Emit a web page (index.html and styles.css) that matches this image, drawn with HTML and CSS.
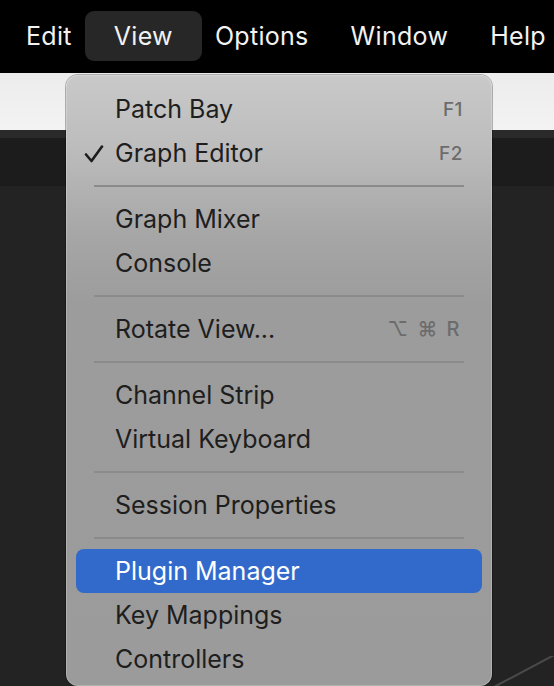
FILE: index.html
```html
<!DOCTYPE html>
<html>
<head>
<meta charset="utf-8">
<link rel="stylesheet" href="styles.css">
</head>
<body>
<div class="screen">
  <nav class="menubar">
    <span class="mb-item">Edit</span>
    <span class="mb-item active">View</span>
    <span class="mb-item">Options</span>
    <span class="mb-item">Window</span>
    <span class="mb-item">Help</span>
  </nav>
  <div class="toolbar"></div>
  <div class="band-top"></div>
  <div class="band"></div>
  <div class="workspace">
    <svg class="wire" width="60" height="30" viewBox="0 0 60 30"><line x1="0" y1="31" x2="62" y2="-2" stroke="#4a4a4a" stroke-width="2"/></svg>
  </div>

  <div class="menu">
    <div class="row"><span class="check"></span><span class="label">Patch Bay</span><span class="key">F1</span></div>
    <div class="row"><span class="check"><svg width="20" height="18" viewBox="0 0 20 18"><path d="M2 9.5 L7.5 16 L18 1.5" fill="none" stroke="#1d1d1d" stroke-width="2.6" stroke-linecap="round" stroke-linejoin="round"/></svg></span><span class="label">Graph Editor</span><span class="key">F2</span></div>
    <div class="sep"></div>
    <div class="row"><span class="check"></span><span class="label">Graph Mixer</span></div>
    <div class="row"><span class="check"></span><span class="label">Console</span></div>
    <div class="sep"></div>
    <div class="row"><span class="check"></span><span class="label">Rotate View...</span><span class="key combo">⌥ ⌘ R</span></div>
    <div class="sep"></div>
    <div class="row"><span class="check"></span><span class="label">Channel Strip</span></div>
    <div class="row"><span class="check"></span><span class="label">Virtual Keyboard</span></div>
    <div class="sep"></div>
    <div class="row"><span class="check"></span><span class="label">Session Properties</span></div>
    <div class="sep"></div>
    <div class="row selected"><span class="check"></span><span class="label">Plugin Manager</span></div>
    <div class="row"><span class="check"></span><span class="label">Key Mappings</span></div>
    <div class="row"><span class="check"></span><span class="label">Controllers</span></div>
  </div>
</div>
</body>
</html>
```
FILE: styles.css
```css
html, body {
  margin: 0;
  padding: 0;
}
body {
  width: 554px;
  height: 686px;
  overflow: hidden;
  background: #232323;
  font-family: Inter, "Noto Sans", "Liberation Sans", sans-serif;
}
.screen {
  position: relative;
  width: 554px;
  height: 686px;
  display: flex;
  flex-direction: column;
}
.menubar {
  height: 73px;
  background: #000;
  display: flex;
  align-items: center;
  gap: 42px;
  padding-left: 26px;
  box-sizing: border-box;
  color: #f2f2f2;
  font-size: 25px;
  letter-spacing: 0.3px;
  white-space: nowrap;
}
.mb-item {
  line-height: 50px;
  height: 50px;
  margin-top: -2px;
}
.mb-item.active {
  background: #272727;
  border-radius: 9px;
  padding: 0 29px;
  margin-left: -29px;
  margin-right: -29px;
}
.toolbar {
  height: 57px;
  background: linear-gradient(#ececec, #f3f3f4);
}
.band-top {
  height: 8px;
  background: #2a2a2a;
}
.band {
  height: 48px;
  background: #1c1c1c;
}
.workspace {
  flex: 1;
  background: #232323;
  display: flex;
  justify-content: flex-end;
  align-items: flex-end;
}
.wire {
  display: block;
}
.menu {
  position: absolute;
  left: 66px;
  top: 75px;
  width: 426px;
  height: 611px;
  box-sizing: border-box;
  padding: 12px 10px 4px;
  border-radius: 12px;
  background: linear-gradient(#c9c9c9 0px, #bdbdbd 70px, #a6a6a6 160px, #9c9c9c 230px, #9b9b9b 100%);
  box-shadow: 0 0 0 1px rgba(0,0,0,0.28), inset 0 0 0 1px rgba(255,255,255,0.22);
  color: #1e1e1e;
  font-size: 25px;
}
.row {
  height: 44px;
  display: flex;
  align-items: center;
  border-radius: 8px;
  padding: 0 19px 0 8px;
  white-space: nowrap;
}
.check {
  width: 31px;
  flex: none;
  display: flex;
  align-items: center;
}
.check svg {
  display: block;
  margin-top: 1px;
}
.label {
  flex: 1;
}
.key {
  color: #6c6c6c;
  font-size: 19px;
  font-weight: 500;
  letter-spacing: 0.5px;
}
.key.combo {
  font-size: 20px;
  word-spacing: 3px;
  margin-right: 3px;
}
.row.selected {
  background: #316acb;
  color: #fff;
}
.sep {
  height: 22px;
  display: flex;
  align-items: center;
  padding: 0 18px;
}
.sep::before {
  content: "";
  display: block;
  width: 100%;
  height: 2px;
  background: #8b8b8b;
}
```
